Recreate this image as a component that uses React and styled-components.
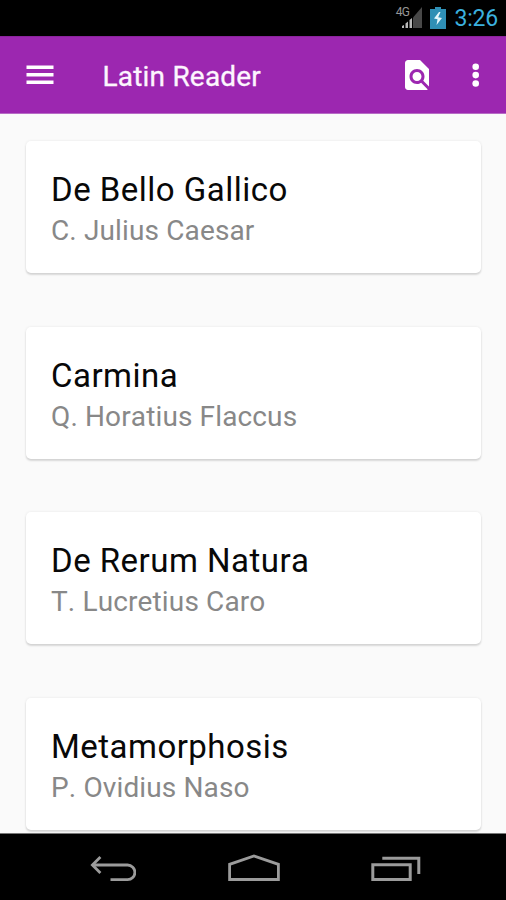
import React from "react";
import styled, { createGlobalStyle } from "styled-components";

const GlobalStyle = createGlobalStyle`
  body {
    margin: 0;
    background: #000;
    font-family: Roboto, "Noto Sans", sans-serif;
    font-kerning: none;
  }
`;

const Screen = styled.div`
  display: flex;
  flex-direction: column;
  width: 506px;
  height: 900px;
  overflow: hidden;
  background: #000;
`;

const StatusBar = styled.div`
  display: flex;
  flex: 0 0 36px;
  box-sizing: border-box;
  justify-content: flex-end;
  align-items: center;
  padding-right: 8px;
`;

const Clock = styled.span`
  margin-left: 8px;
  padding-top: 2px;
  font-size: 23px;
  line-height: 34px;
  letter-spacing: -0.2px;
  color: #3bb0de;
`;

const Signal = styled.div`
  display: flex;
  align-items: flex-start;
  margin-right: 8px;
  height: 22px;
`;

const Network = styled.span`
  margin-right: -8px;
  font-size: 12px;
  line-height: 11px;
  letter-spacing: -0.6px;
  color: #969696;
`;

const Toolbar = styled.header`
  display: flex;
  flex: 0 0 78px;
  box-sizing: border-box;
  align-items: center;
  background: #9c27b0;
  border-top: 1px solid #8a239c;
  border-bottom: 1px solid #b76bc5;
  padding: 0 10px 0 20px;
`;

const AppTitle = styled.h1`
  flex: 1;
  margin: 3px 0 0 42.5px;
  font-size: 28px;
  line-height: 36px;
  font-weight: 400;
  letter-spacing: 0.2px;
  color: #fdf5fe;
  -webkit-text-stroke: 0.3px #fdf5fe;
`;

const IconButton = styled.button`
  display: flex;
  margin: 0 0 0 ${(props) => props.$gap || 0}px;
  padding: 0;
  border: 0;
  background: none;
  color: #fff;
`;

const Books = styled.main`
  display: flex;
  flex: 0 0 719px;
  box-sizing: border-box;
  flex-direction: column;
  gap: 53.6px;
  padding: 27px 25px 0 26px;
  overflow: hidden;
  background: #fafafa;
`;

const Card = styled.article`
  flex: 0 0 132px;
  box-sizing: border-box;
  padding: 28px 25px 0;
  border-radius: 5px;
  background: #fff;
  box-shadow: 0 0 2px 1px rgba(0, 0, 0, 0.04), 0 2px 2px rgba(0, 0, 0, 0.13);
`;

const BookTitle = styled.h2`
  margin: 0;
  font-size: 33px;
  line-height: 42px;
  font-weight: 400;
  letter-spacing: 0.48px;
  color: #080808;
  white-space: nowrap;
`;

const Author = styled.p`
  margin: 0;
  font-size: 28px;
  line-height: 39px;
  letter-spacing: 0.13px;
  color: #888;
  white-space: nowrap;
`;

const NavBar = styled.nav`
  display: flex;
  flex: 1;
  box-sizing: border-box;
  justify-content: center;
  align-items: center;
  gap: 91.5px;
  padding-left: 5px;
  border-top: 1px solid #777;
  color: #9b9b9b;
`;

const books = [
  { title: "De Bello Gallico", author: "C. Julius Caesar" },
  { title: "Carmina", author: "Q. Horatius Flaccus" },
  { title: "De Rerum Natura", author: "T. Lucretius Caro" },
  { title: "Metamorphosis", author: "P. Ovidius Naso" },
];

const SignalIcon = () => (
  <svg width="21" height="22" viewBox="0 0 21 22">
    <path d="M12 10.5 21 0v21h-9z" fill="#484848" />
    <path d="M1 21v-2l2-1v3zM4.5 21v-4.5l2.5-2V21zM8.5 21v-8l2.5-2V21z" fill="#b8b8b8" />
  </svg>
);

const BatteryIcon = () => (
  <svg width="16" height="22" viewBox="0 0 16 22">
    <path d="M5 0h6v2h5v20H0V2h5z" fill="#2f8fb5" />
    <path d="m9 5-5 6.5 3.5.7L6.5 18l5.5-7-3.8-.8L10.5 5z" fill="#e4f6fc" />
  </svg>
);

const MenuIcon = () => (
  <svg width="40" height="40" viewBox="0 0 40 40">
    <path d="M6.5 12.3h27M6.5 19.8h27M6.5 27.3h27" stroke="currentColor" strokeWidth="3.4" />
  </svg>
);

const FindInPageIcon = () => (
  <svg width="36" height="36" viewBox="0 0 24 24" fill="currentColor">
    <path d="M20 19.59V8l-6-6H6c-1.1 0-1.99.9-1.99 2L4 20c0 1.1.89 2 1.99 2H18c.45 0 .85-.15 1.19-.4l-4.43-4.43c-.8.52-1.74.83-2.76.83-2.76 0-5-2.24-5-5s2.24-5 5-5 5 2.24 5 5c0 1.02-.31 1.96-.83 2.75L20 19.59zM9 13c0 1.66 1.34 3 3 3s3-1.34 3-3-1.34-3-3-3-3 1.34-3 3z" />
  </svg>
);

const MoreIcon = () => (
  <svg width="40" height="40" viewBox="0 0 40 40" fill="currentColor">
    <circle cx="19.7" cy="11.7" r="3.3" />
    <circle cx="19.7" cy="20.1" r="3.3" />
    <circle cx="19.7" cy="28.5" r="3.3" />
  </svg>
);

const BackIcon = () => (
  <svg width="46" height="27" viewBox="0 0 46 27" fill="none" stroke="currentColor" strokeWidth="2.8">
    <path d="M2.4 11h35.2a7.3 7.3 0 0 1 0 14.6H20.5" />
    <path d="M10.4 3 2.4 11l8 8" />
  </svg>
);

const HomeIcon = () => (
  <svg width="52" height="27" viewBox="0 0 52 27" fill="none" stroke="currentColor" strokeWidth="2.8">
    <path d="M1.6 25.5V10.3L26 2l24.4 8.3v15.2z" />
  </svg>
);

const RecentIcon = () => (
  <svg width="50" height="27" viewBox="0 0 50 27" fill="none" stroke="currentColor" strokeWidth="3">
    <path d="M1.8 10.8h37.4v14.6H1.8zM11.3 4.2h36.5V20" />
  </svg>
);

const App = () => {
  return (
    <Screen>
      <GlobalStyle />
      <StatusBar>
        <Signal>
          <Network>4G</Network>
          <SignalIcon />
        </Signal>
        <BatteryIcon />
        <Clock>3:26</Clock>
      </StatusBar>
      <Toolbar>
        <IconButton aria-label="Menu">
          <MenuIcon />
        </IconButton>
        <AppTitle>Latin Reader</AppTitle>
        <IconButton aria-label="Find in text">
          <FindInPageIcon />
        </IconButton>
        <IconButton aria-label="More options" $gap={21}>
          <MoreIcon />
        </IconButton>
      </Toolbar>
      <Books>
        {books.map((book) => (
          <Card key={book.title}>
            <BookTitle>{book.title}</BookTitle>
            <Author>{book.author}</Author>
          </Card>
        ))}
      </Books>
      <NavBar>
        <BackIcon />
        <HomeIcon />
        <RecentIcon />
      </NavBar>
    </Screen>
  );
};

export default App;
